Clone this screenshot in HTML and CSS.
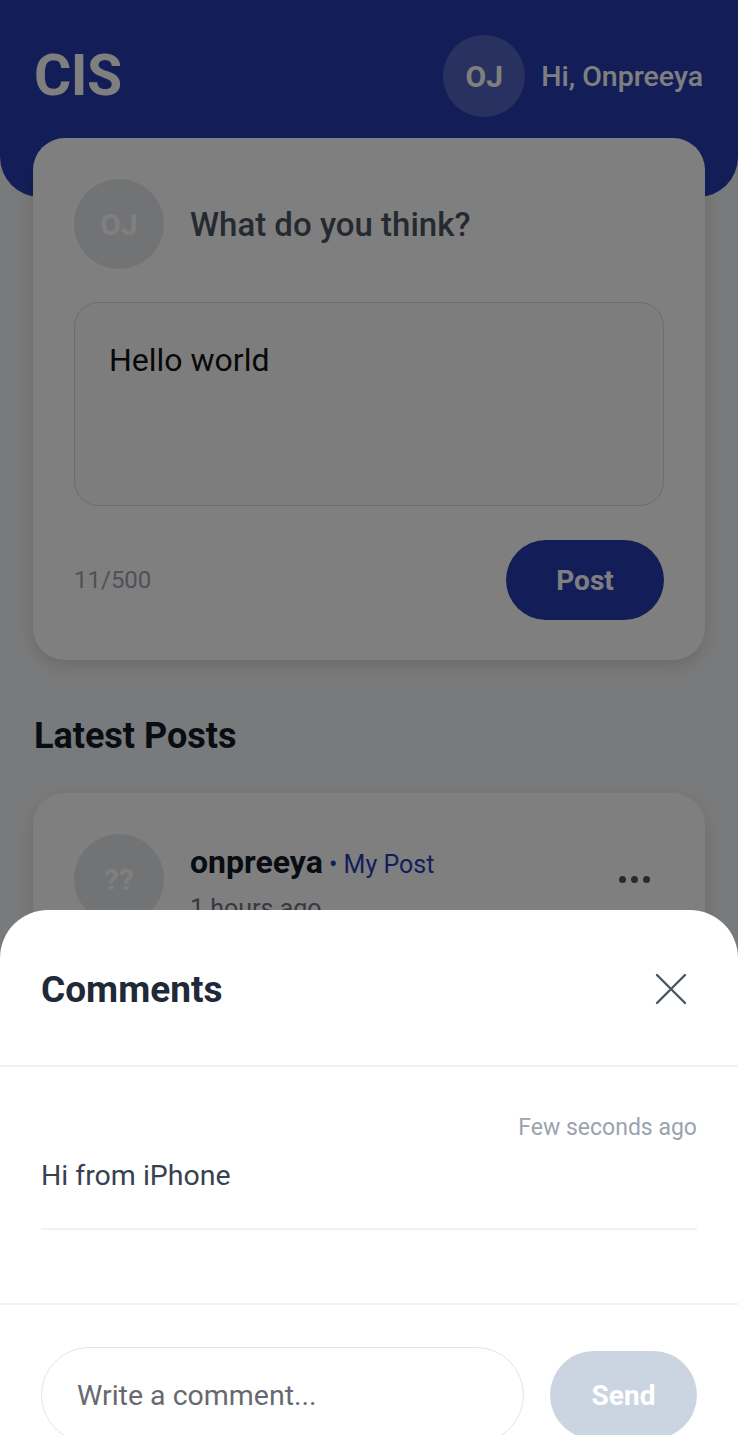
FILE: index.html
```html
<!DOCTYPE html>
<html lang="en">
<head>
<meta charset="utf-8">
<title>CIS</title>
<link rel="stylesheet" href="styles.css">
</head>
<body>
<div class="page">
  <header class="topbar">
    <div class="brand">CIS</div>
    <div class="user">
      <div class="avatar avatar-header">OJ</div>
      <span class="greeting">Hi, Onpreeya</span>
    </div>
  </header>

  <main class="content">
    <section class="card composer">
      <div class="composer-head">
        <div class="avatar avatar-muted">OJ</div>
        <span class="prompt">What do you think?</span>
      </div>
      <div class="textarea">Hello world</div>
      <div class="composer-foot">
        <span class="counter">11/500</span>
        <button class="btn-post">Post</button>
      </div>
    </section>

    <h2 class="section-title">Latest Posts</h2>

    <article class="card post">
      <div class="post-head">
        <div class="avatar avatar-muted">??</div>
        <div class="post-meta">
          <div class="post-author"><span class="author">onpreeya</span><span class="tag"> • My Post</span></div>
          <div class="post-time">1 hours ago</div>
        </div>
        <div class="more"><i></i><i></i><i></i></div>
      </div>
      <p class="post-body">Hello world</p>
    </article>
  </main>
</div>

<div class="backdrop"></div>

<section class="sheet">
  <div class="sheet-head">
    <h3 class="sheet-title">Comments</h3>
    <svg class="close" width="32" height="32" viewBox="0 0 32 32" fill="none" stroke="#4b5563" stroke-width="2.4" stroke-linecap="round">
      <path d="M2 2 L30 30 M30 2 L2 30"/>
    </svg>
  </div>
  <div class="comment-list">
    <div class="comment">
      <div class="comment-time">Few seconds ago</div>
      <div class="comment-text">Hi from iPhone</div>
    </div>
  </div>
  <div class="sheet-foot">
    <div class="comment-input">Write a comment...</div>
    <button class="btn-send">Send</button>
  </div>
</section>
</body>
</html>
```

FILE: styles.css
```css
* { box-sizing: border-box; }
html, body { margin: 0; padding: 0; }
body {
  font-family: Roboto, "Noto Sans", "Liberation Sans", sans-serif;
  background: #f3f4f6;
  width: 738px;
  height: 1435px;
  overflow: hidden;
  position: relative;
}

.topbar {
  background: #273db3;
  height: 197px;
  border-radius: 0 0 40px 40px;
  padding: 35px 35px 0 34px;
  display: flex;
  justify-content: space-between;
  align-items: flex-start;
}
.brand {
  color: #ffffff;
  font-weight: 700;
  font-size: 57px;
  line-height: 82px;
  letter-spacing: -0.5px;
}
.user { display: flex; align-items: center; gap: 16px; }
.avatar {
  border-radius: 50%;
  display: flex;
  align-items: center;
  justify-content: center;
  font-weight: 700;
  flex-shrink: 0;
}
.avatar-header {
  width: 82px; height: 82px;
  background: rgba(255,255,255,0.2);
  color: #ffffff;
  font-size: 30px;
}
.greeting { color: #ffffff; font-size: 28.5px; font-weight: 500; }

.content { padding: 0 33px; }
.card {
  background: #ffffff;
  border-radius: 32px;
  box-shadow: 0 6px 16px rgba(0,0,0,0.12);
  padding: 41px 41px 40px;
}
.composer { margin-top: -59px; }
.composer-head { display: flex; align-items: center; gap: 26px; }
.avatar-muted {
  width: 90px; height: 90px;
  background: #e5e7eb;
  color: #ffffff;
  font-size: 30px;
}
.prompt { font-size: 33px; font-weight: 500; color: #4b5563; }
.textarea {
  margin-top: 33px;
  height: 204px;
  border: 1.5px solid #d8dbe0;
  border-radius: 24px;
  background: #fafafa;
  padding: 36px 34px;
  font-size: 32px;
  line-height: 42px;
  color: #111111;
}
.composer-foot {
  margin-top: 34px;
  display: flex;
  justify-content: space-between;
  align-items: center;
}
.counter { font-size: 24px; color: #9ca3af; }
.btn-post {
  width: 158px; height: 80px;
  border: none;
  border-radius: 40px;
  background: #273db3;
  color: #ffffff;
  font-family: inherit;
  font-weight: 700;
  font-size: 28px;
}
.section-title {
  margin: 53px 1px 34px;
  font-size: 36px;
  font-weight: 700;
  color: #111827;
  line-height: 46px;
}
.post { padding-top: 41px; }
.post-head { display: flex; align-items: center; gap: 26px; }
.post-meta { flex: 1; padding-top: 6px; }
.post-author { line-height: 40px; }
.author { font-size: 32px; font-weight: 700; color: #111827; }
.tag { font-size: 25px; color: #273db3; }
.post-time { font-size: 25px; color: #6b7280; margin-top: 6px; }
.more { display: flex; gap: 5px; margin-right: 14px; }
.more i { width: 7px; height: 7px; border-radius: 50%; background: #4b5563; display: block; }
.post-body { font-size: 28px; margin: 30px 0 0; color: #111827; }

.backdrop {
  position: fixed;
  inset: 0;
  background: rgba(0,0,0,0.5);
}

.sheet {
  position: absolute;
  left: 0; right: 0;
  top: 910px;
  height: 600px;
  background: #ffffff;
  border-radius: 48px 48px 0 0;
}
.sheet-head {
  height: 157px;
  padding: 0 51px 0 41px;
  display: flex;
  align-items: center;
  justify-content: space-between;
  border-bottom: 2px solid #f1f2f4;
}
.sheet-title {
  margin: 0;
  font-size: 37px;
  font-weight: 700;
  color: #1f2937;
  padding-top: 4px;
}
.close { width: 32px; height: 32px; margin-top: 2px; }
.comment-list {
  height: 238px;
  padding: 46px 41px 0;
  border-bottom: 2px solid #f1f2f4;
}
.comment {
  border-bottom: 2px solid #f1f2f4;
  padding-bottom: 32px;
}
.comment-time {
  text-align: right;
  font-size: 23px;
  line-height: 30px;
  color: #9ca3af;
}
.comment-text {
  margin-top: 13px;
  font-size: 28.5px;
  line-height: 40px;
  color: #374151;
}
.sheet-foot {
  padding: 42px 41px 0;
  display: flex;
  align-items: flex-start;
  gap: 26px;
}
.comment-input {
  flex: 1;
  height: 96px;
  border: 1.5px solid #e2e4e8;
  border-radius: 48px;
  padding: 0 35px;
  display: flex;
  align-items: center;
  font-size: 28.5px;
  color: #666a70;
}
.btn-send {
  margin-top: 4px;
  width: 147px;
  height: 88px;
  border: none;
  border-radius: 44px;
  background: #cbd5e1;
  color: #ffffff;
  font-family: inherit;
  font-weight: 700;
  font-size: 28px;
}
```
